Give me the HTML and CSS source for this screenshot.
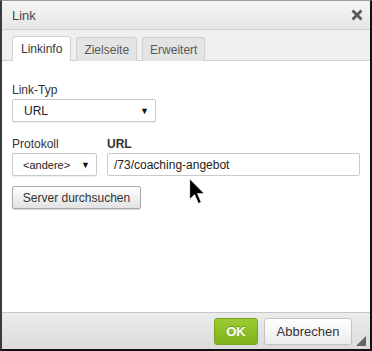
FILE: index.html
```html
<!DOCTYPE html>
<html>
<head>
<meta charset="utf-8">
<link rel="stylesheet" href="styles.css">
</head>
<body>
<div class="dialog">
  <div class="titlebar">
    <span class="title">Link</span>
    <svg class="close" width="12" height="12" viewBox="0 0 12 12"><path d="M1.5 1.5 L10.5 10.5 M10.5 1.5 L1.5 10.5" stroke="#585858" stroke-width="2.8" stroke-linecap="butt"/></svg>
  </div>
  <div class="tabs">
    <div class="tab active">Linkinfo</div>
    <div class="tab">Zielseite</div>
    <div class="tab">Erweitert</div>
  </div>
  <div class="content">
    <div class="field">
      <label class="lbl">Link-Typ</label>
      <div class="select sel-type"><span>URL</span><span class="arrow">&#9660;</span></div>
    </div>
    <div class="row">
      <div class="field">
        <label class="lbl">Protokoll</label>
        <div class="select sel-proto"><span>&lt;andere&gt;</span><span class="arrow">&#9660;</span></div>
      </div>
      <div class="field grow">
        <label class="lbl bold">URL</label>
        <div class="input">/73/coaching-angebot</div>
      </div>
    </div>
    <div class="btn">Server durchsuchen</div>
    <svg class="cursor" width="16" height="27" viewBox="0 0 12 20"><path d="M0.5 0.5 L0.5 16 L4.2 12.4 L7 19 L9.2 18 L6.4 11.6 L11.5 11.6 Z" fill="#000" stroke="#fff" stroke-width="0.6"/></svg>
  </div>
  <div class="footer">
    <div class="ok">OK</div>
    <div class="cancel">Abbrechen</div>
    <div class="grip"></div>
  </div>
</div>
</body>
</html>
```
FILE: styles.css
```css
html, body { margin: 0; padding: 0; }
body { font-family: "Liberation Sans", Arial, sans-serif; font-size: 12px; color: #333; background: #fff; }
.dialog {
  width: 372px; height: 351px; box-sizing: border-box;
  border-left: 2px solid #3a3a3a; border-right: 2px solid #111; border-bottom: 2px solid #111; border-top: 1px solid #9a9a9a;
  display: flex; flex-direction: column; position: relative; background: #fff;
}
.titlebar {
  height: 28px; flex: none; display: flex; align-items: center; justify-content: space-between;
  padding: 0 7px 0 10px;
  background: linear-gradient(#f6f6f6, #e6e6e6);
  border-bottom: 1px solid #cfcfcf;
}
.title { font-size: 13px; color: #474747; }
.close { display: block; }
.tabs {
  flex: none; display: flex; align-items: flex-end; gap: 5px;
  padding-left: 10px; background: #efefef; border-bottom: 1px solid #d1d1d1; box-sizing: border-box; height: 31px;
}
.tab {
  height: 24px; box-sizing: border-box; padding: 0 7px; display: flex; align-items: center;
  border: 1px solid #d1d1d1; border-bottom: none; border-radius: 3px 3px 0 0;
  background: #e4e4e4; color: #595959; font-size: 12px; margin-bottom: -1px;
}
.tab.active { background: #fff; color: #383838; height: 25px; padding: 0 8px; }
.content { flex: 1; padding: 22px 10px 0 10px; position: relative; }
.field { display: flex; flex-direction: column; }
.lbl { font-size: 12px; color: #333; height: 15px; line-height: 15px; margin-bottom: 1px; }
.lbl.bold { font-weight: bold; }
.select {
  height: 23px; box-sizing: border-box; border: 1px solid #c9c9c9; border-radius: 2px; background: #fff;
  display: flex; align-items: center; justify-content: space-between; padding: 0 6px 0 11px;
  font-size: 12px; color: #222; box-shadow: 0 1px 0 #eee;
}
.sel-type { width: 144px; }
.sel-proto { width: 85px; padding-left: 10px; font-size: 11px; }
.arrow { font-size: 9px; color: #111; }
.row { display: flex; gap: 10px; margin-top: 15px; }
.grow { flex: 1; }
.input {
  height: 23px; box-sizing: border-box; border: 1px solid #c9c9c9; border-radius: 2px; background: #fff;
  display: flex; align-items: center; padding-left: 6px; font-size: 12px; color: #222;
}
.btn {
  margin-top: 10px; width: 129px; height: 23px; box-sizing: border-box;
  border: 1px solid #a9a9a9; border-radius: 2px;
  background: linear-gradient(#fff, #e2e2e2); box-shadow: 0 1px 1px rgba(0,0,0,0.15);
  display: flex; align-items: center; justify-content: center; font-size: 12px; color: #333;
}
.cursor { position: absolute; left: 187px; top: 117px; }
.footer {
  height: 37px; flex: none; box-sizing: border-box; border-top: 1px solid #c6c6c6;
  background: linear-gradient(#ebebeb, #dcdcdc);
  display: flex; align-items: center; justify-content: flex-end; gap: 6px; padding-right: 18px;
  position: relative;
}
.ok {
  width: 44px; height: 27px; box-sizing: border-box; border: 1px solid #7aa31e; border-radius: 3px;
  background: linear-gradient(#9ccb33, #80b21a); color: #fff; font-weight: bold; font-size: 13px;
  display: flex; align-items: center; justify-content: center; text-shadow: 0 -1px 0 #6c9615;
}
.cancel {
  width: 88px; height: 27px; box-sizing: border-box; border: 1px solid #c2c2c2; border-radius: 3px;
  background: linear-gradient(#fff, #ececec); color: #333; font-size: 13px;
  display: flex; align-items: center; justify-content: center;
}
.grip {
  position: absolute; right: 4px; bottom: 3px; width: 0; height: 0;
  border-left: 10px solid transparent; border-bottom: 10px solid #666;
}
```
